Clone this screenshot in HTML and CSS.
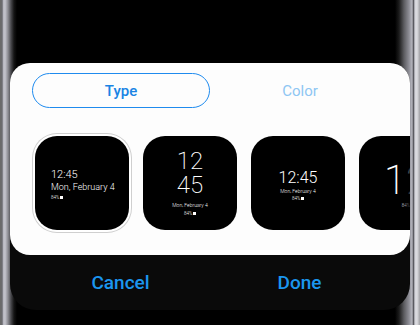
FILE: index.html
```html
<!DOCTYPE html>
<html>
<head>
<meta charset="utf-8">
<link rel="stylesheet" href="styles.css">
</head>
<body>
<div class="screen">
  <div class="dialog">
    <div class="sheet">
      <div class="tabs">
        <div class="tab active">Type</div>
        <div class="tab">Color</div>
      </div>
      <div class="faces">
        <div class="face selected f1">
          <div class="time">12:45</div>
          <div class="date">Mon, February 4</div>
          <div class="batt">84% <span class="cell"></span></div>
        </div>
        <div class="face f2">
          <div class="time">12</div>
          <div class="time">45</div>
          <div class="date">Mon, February 4</div>
          <div class="batt">84% <span class="cell"></span></div>
        </div>
        <div class="face f3">
          <div class="time">12:45</div>
          <div class="date">Mon, February 4</div>
          <div class="batt">84% <span class="cell"></span></div>
        </div>
        <div class="face f4">
          <div class="time">12</div>
          <div class="batt">84%</div>
        </div>
      </div>
    </div>
    <div class="actions">
      <div class="btn">Cancel</div>
      <div class="btn">Done</div>
    </div>
  </div>
</div>
</body>
</html>
```

FILE: styles.css
```css
html, body {
  margin: 0;
  padding: 0;
}
body {
  width: 420px;
  height: 325px;
  overflow: hidden;
  font-family: Roboto, "Noto Sans", sans-serif;
  background: linear-gradient(to right,
    #4a4a4a 0px, #8a8a8a 1px, #4c4c50 2px, #b4b4bc 3px, #c4c4cc 5px,
    #8c8c92 8px, #48484c 11px, #141414 14px, #000 17px,
    #000 395px, #1c1c1c 399px, #5c5c60 404px, #8e8e96 409px,
    #b4b4bc 412px, #5a5a60 413.5px, #d4d4da 415px, #dcdce0 417px, #a0a0a4 420px);
}
.screen {
  padding: 63px 10px 0;
}
.dialog {
  background: #0a0a0a;
  border-radius: 20px 20px 26px 26px;
}
.sheet {
  background: #fdfdfd;
  border-radius: 20px;
  padding: 10px 22px 22px;
  overflow: hidden;
}
.tabs {
  display: flex;
  gap: 2px;
}
.tab {
  flex: 1;
  height: 35px;
  box-sizing: border-box;
  border-radius: 18px;
  display: flex;
  align-items: center;
  justify-content: center;
  font-size: 15px;
  color: #8ec6f3;
}
.tab.active {
  border: 1.5px solid #1f8bee;
  color: #1a84e4;
  font-weight: 500;
}
.faces {
  display: flex;
  gap: 14px;
  margin: 25px -22px 0 0;
  padding-left: 3px;
  overflow: hidden;
}
.face {
  flex: 0 0 94px;
  height: 94px;
  margin: 3px 0;
  background: #000;
  border-radius: 22px;
  color: #fff;
  display: flex;
  flex-direction: column;
  justify-content: center;
  align-items: center;
  font-weight: 300;
  position: relative;
  overflow: hidden;
}
.faces .selected {
  box-shadow: 0 0 0 2px #fff, 0 0 0 3px #cfcfcf;
}
.cell {
  display: inline-block;
  width: 2.5px;
  height: 3px;
  background: #fff;
  vertical-align: middle;
}
.batt {
  font-size: 4.5px;
  line-height: 6px;
}
.f1 {
  align-items: flex-start;
  padding-left: 16px;
  box-sizing: border-box;
  padding-top: 2px;
}
.f1 .time {
  font-size: 11px;
  line-height: 13px;
}
.f1 .date {
  font-size: 9px;
  line-height: 12px;
}
.f1 .batt {
  margin-top: 2px;
}
.f2 .time {
  font-size: 24px;
  line-height: 24px;
  font-weight: 200;
  text-align: center;
}
.f2 .date {
  font-size: 5px;
  line-height: 8px;
  margin-top: 4px;
}
.f2 .batt {
  margin-top: 2px;
}
.f3 {
  padding-top: 4px;
  box-sizing: border-box;
}
.f3 .time {
  font-size: 16px;
  line-height: 17px;
  font-weight: 300;
}
.f3 .date {
  font-size: 5px;
  line-height: 8px;
  margin-top: 1px;
}
.f3 .batt {
  margin-top: 1px;
}
.f4 {
  padding-top: 4px;
  box-sizing: border-box;
}
.f4 .time {
  font-size: 40px;
  line-height: 40px;
  font-weight: 200;
}
.f4 .batt {
  margin-top: 2px;
}
.f4::after {
  content: "";
  position: absolute;
  top: 0;
  bottom: 0;
  left: 42px;
  width: 60px;
  background: linear-gradient(to right, rgba(0,0,0,0) 0, #000 11px);
}
.actions {
  display: flex;
  gap: 2px;
  height: 55px;
  padding: 0 22px;
}
.btn {
  flex: 1;
  display: flex;
  align-items: center;
  justify-content: center;
  font-size: 19px;
  font-weight: 500;
  color: #1b96ef;
  padding-bottom: 1px;
}
```
